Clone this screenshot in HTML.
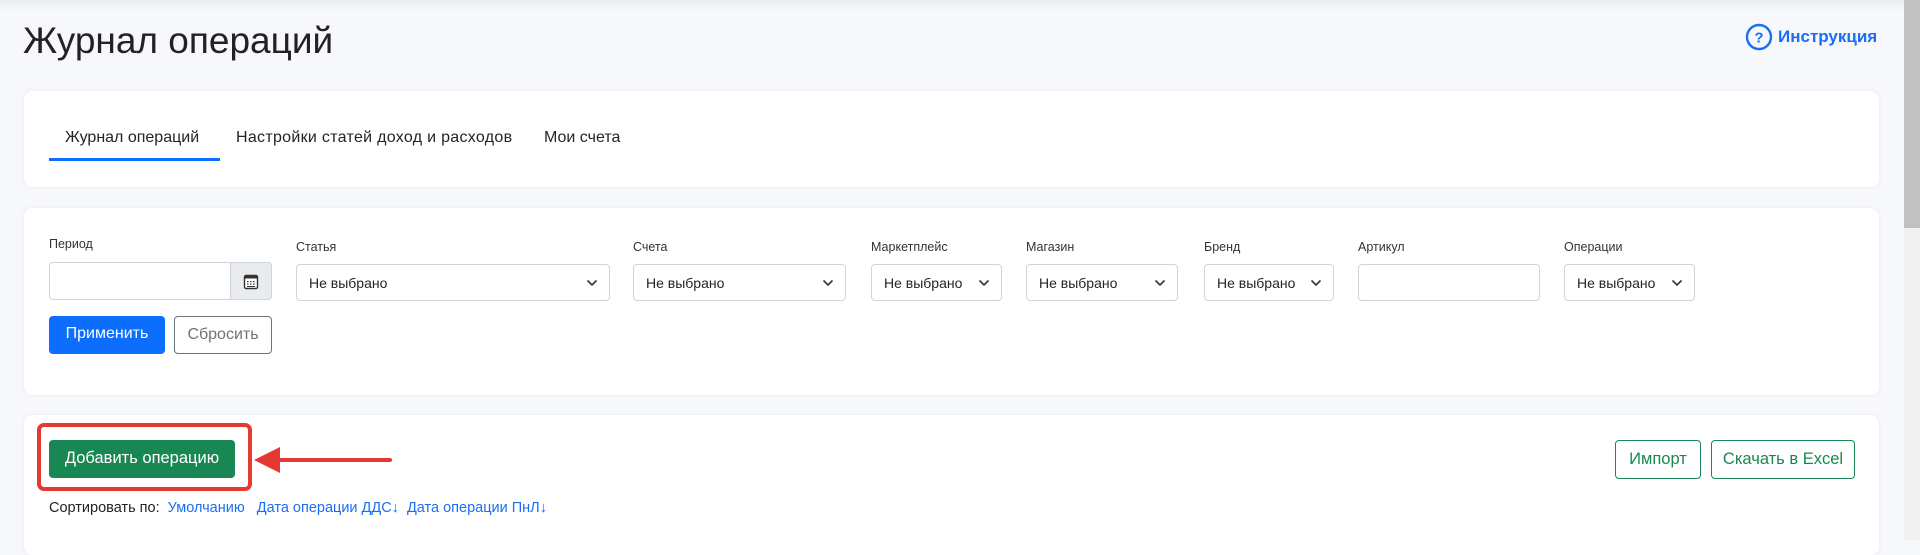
<!DOCTYPE html>
<html><head><meta charset="utf-8"><style>
*{box-sizing:border-box;margin:0;padding:0}
body{width:1920px;height:540px;overflow:hidden;background:#f7f8fc;font-family:"Liberation Sans",sans-serif;position:relative;color:#212529}
.abs{position:absolute}
.card{position:absolute;left:24px;width:1855px;background:#fff;border-radius:9px;box-shadow:0 0 6px rgba(0,0,0,.06)}
.lbl{position:absolute;font-size:12.5px;color:#333}
.sel{position:absolute;top:264px;height:37px;border:1px solid #d0d4d9;border-radius:4px;font-size:14px;color:#212529;padding:10px 0 0 12px;background:#fff}
.sel svg{position:absolute;right:11px;top:14px}
.btn{position:absolute;border-radius:4px;font-size:15px;text-align:center;white-space:nowrap}
</style></head><body>
<div class="abs" style="left:0;top:0;width:1904px;height:12px;background:linear-gradient(#ebecf0,#f7f8fc)"></div>
<div class="abs" style="left:1904px;top:0;width:16px;height:540px;background:#f1f1f1"></div>
<div class="abs" style="left:1904px;top:0;width:16px;height:228px;background:#c1c1c1"></div>

<div class="abs" style="left:23px;top:20px;font-size:37px;color:#222">Журнал операций</div>
<svg class="abs" style="left:1745px;top:23px" width="28" height="28" viewBox="0 0 28 28"><circle cx="14" cy="14" r="12" fill="none" stroke="#1a6ef5" stroke-width="2.4"/><text x="14" y="19.5" text-anchor="middle" font-family="Liberation Sans" font-weight="bold" font-size="15" fill="#1a6ef5">?</text></svg>
<div class="abs" style="left:1778px;top:27px;font-size:17px;font-weight:bold;color:#1a6ef5">Инструкция</div>

<div class="card" style="top:91px;height:96px"></div>
<div class="abs" style="left:65px;top:129px;font-size:16px">Журнал операций</div>
<div class="abs" style="left:236px;top:129px;font-size:16px;letter-spacing:.3px">Настройки статей доход и расходов</div>
<div class="abs" style="left:544px;top:129px;font-size:16px">Мои счета</div>
<div class="abs" style="left:49px;top:158px;width:171px;height:3px;background:#0d6efd"></div>

<div class="card" style="top:208px;height:187px"></div>
<div class="lbl" style="left:49px;top:237px">Период</div>
<div class="lbl" style="left:296px;top:240px">Статья</div>
<div class="lbl" style="left:633px;top:240px">Счета</div>
<div class="lbl" style="left:871px;top:240px">Маркетплейс</div>
<div class="lbl" style="left:1026px;top:240px">Магазин</div>
<div class="lbl" style="left:1204px;top:240px">Бренд</div>
<div class="lbl" style="left:1358px;top:240px">Артикул</div>
<div class="lbl" style="left:1564px;top:240px">Операции</div>
<div class="abs" style="left:49px;top:262px;width:223px;height:38px;border:1px solid #d0d4d9;border-radius:4px;background:#fff"></div>
<div class="abs" style="left:230px;top:262px;width:42px;height:38px;border:1px solid #d0d4d9;border-radius:0 4px 4px 0;background:#e9ecef"></div>
<svg class="abs" style="left:243px;top:274px" width="16" height="16" viewBox="0 0 16 16"><rect x="1.5" y="1.5" width="13" height="13" rx="1.5" fill="#fff" stroke="#333" stroke-width="1.4"/><rect x="1.5" y="1.5" width="13" height="3" fill="#333"/><g fill="#333"><rect x="4" y="7" width="1.5" height="1.2"/><rect x="7" y="7" width="1.5" height="1.2"/><rect x="10" y="7" width="1.5" height="1.2"/><rect x="4" y="9.5" width="1.5" height="1.2"/><rect x="7" y="9.5" width="1.5" height="1.2"/><rect x="10" y="9.5" width="1.5" height="1.2"/><rect x="4" y="12" width="8" height="1"/></g></svg>
<div class="sel" style="left:296px;width:314px">Не выбрано<svg width="12" height="8" viewBox="0 0 12 8"><path d="M1.5 1.5l4.5 4.5 4.5-4.5" fill="none" stroke="#333" stroke-width="1.6"/></svg></div>
<div class="sel" style="left:633px;width:213px">Не выбрано<svg width="12" height="8" viewBox="0 0 12 8"><path d="M1.5 1.5l4.5 4.5 4.5-4.5" fill="none" stroke="#333" stroke-width="1.6"/></svg></div>
<div class="sel" style="left:871px;width:131px;overflow:hidden;white-space:nowrap">Не выбрано<svg width="12" height="8" viewBox="0 0 12 8" style="background:#fff"><path d="M1.5 1.5l4.5 4.5 4.5-4.5" fill="none" stroke="#333" stroke-width="1.6"/></svg></div>
<div class="sel" style="left:1026px;width:152px">Не выбрано<svg width="12" height="8" viewBox="0 0 12 8"><path d="M1.5 1.5l4.5 4.5 4.5-4.5" fill="none" stroke="#333" stroke-width="1.6"/></svg></div>
<div class="sel" style="left:1204px;width:130px">Не выбрано<svg width="12" height="8" viewBox="0 0 12 8"><path d="M1.5 1.5l4.5 4.5 4.5-4.5" fill="none" stroke="#333" stroke-width="1.6"/></svg></div>
<div class="sel" style="left:1358px;width:182px"></div>
<div class="sel" style="left:1564px;width:131px">Не выбрано<svg width="12" height="8" viewBox="0 0 12 8"><path d="M1.5 1.5l4.5 4.5 4.5-4.5" fill="none" stroke="#333" stroke-width="1.6"/></svg></div>
<div class="btn" style="left:49px;top:316px;width:116px;height:38px;background:#0d6efd;color:#fff;padding-top:9px;font-size:16px">Применить</div>
<div class="btn" style="left:174px;top:316px;width:98px;height:38px;border:1px solid #6c757d;color:#6c757d;padding-top:9px;font-size:16px">Сбросить</div>

<div class="card" style="top:415px;height:140px"></div>
<div class="abs" style="left:37px;top:423px;width:215px;height:68px;border:4px solid #e53935;border-radius:7px"></div>
<div class="btn" style="left:49px;top:440px;width:186px;height:38px;background:#198754;color:#fff;padding-top:9px;font-size:16.5px">Добавить операцию</div>
<svg class="abs" style="left:250px;top:444px" width="145" height="32" viewBox="0 0 145 32"><path d="M140 16H25" stroke="#e53935" stroke-width="4" stroke-linecap="round"/><path d="M4 16L30 3V29Z" fill="#e53935"/></svg>
<div class="btn" style="left:1615px;top:440px;width:86px;height:39px;border:1px solid #198754;color:#198754;padding-top:9px;font-size:16.5px">Импорт</div>
<div class="btn" style="left:1711px;top:440px;width:144px;height:39px;border:1px solid #198754;color:#198754;padding-top:9px;font-size:16.5px">Скачать в Excel</div>
<div class="abs" style="left:49px;top:500px;font-size:14.5px;color:#222;white-space:nowrap">Сортировать по:&nbsp;&nbsp;<span style="color:#1a6ef5">Умолчанию&nbsp;&nbsp; Дата операции ДДС↓&nbsp; Дата операции ПнЛ↓</span></div>
</body></html>
